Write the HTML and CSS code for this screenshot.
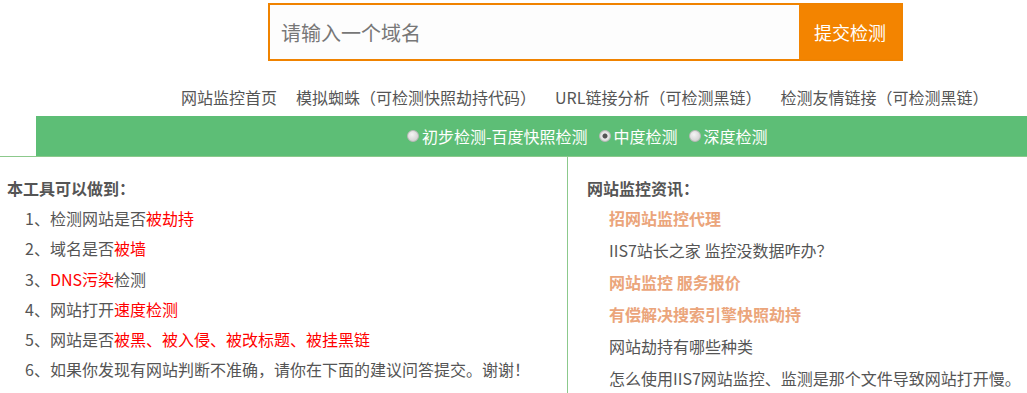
FILE: index.html
```html
<!DOCTYPE html>
<html lang="zh-CN">
<head>
    <meta charset="UTF-8">
    <title>网站监控</title>
    <link rel="stylesheet" href="styles.css">
</head>
<body>
    <form class="search">
        <input type="text" class="domain" placeholder="请输入一个域名">
        <button type="button" class="submit">提交检测</button>
    </form>

    <div class="nav">
        <a href="#">网站监控首页</a>
        <a href="#">模拟蜘蛛（可检测快照劫持代码）</a>
        <a href="#">URL链接分析（可检测黑链）</a>
        <a href="#">检测友情链接（可检测黑链）</a>
    </div>

    <div class="bar-wrap">
        <div class="bar">
            <label><input type="radio" name="level">初步检测-百度快照检测</label>
            <label><input type="radio" name="level" checked>中度检测</label>
            <label><input type="radio" name="level">深度检测</label>
        </div>
    </div>

    <div class="columns">
        <div class="col left">
            <h3>本工具可以做到：</h3>
            <p>1、检测网站是否<span class="red">被劫持</span></p>
            <p>2、域名是否<span class="red">被墙</span></p>
            <p>3、<span class="red">DNS污染</span>检测</p>
            <p>4、网站打开<span class="red">速度检测</span></p>
            <p>5、网站是否<span class="red">被黑、被入侵、被改标题、被挂黑链</span></p>
            <p>6、如果你发现有网站判断不准确，请你在下面的建议问答提交。谢谢！</p>
        </div>
        <div class="col right">
            <h3>网站监控资讯：</h3>
            <p><a href="#" class="hot">招网站监控代理</a></p>
            <p><a href="#">IIS7站长之家 监控没数据咋办？</a></p>
            <p><a href="#" class="hot">网站监控 服务报价</a></p>
            <p><a href="#" class="hot">有偿解决搜索引擎快照劫持</a></p>
            <p><a href="#">网站劫持有哪些种类</a></p>
            <p><a href="#">怎么使用IIS7网站监控、监测是那个文件导致网站打开慢。</a></p>
        </div>
    </div>
</body>
</html>
```

FILE: styles.css
```css
body {
    margin: 0;
    font-family: "Noto Sans CJK SC", "Liberation Sans", sans-serif;
    font-size: 16px;
    color: #555;
    background: #fff;
}
.search {
    display: flex;
    width: 635px;
    height: 58px;
    margin: 3px 0 0 268px;
    border: 2px solid #f08300;
    box-sizing: border-box;
}
.domain {
    flex: 1;
    border: none;
    outline: none;
    padding: 0 11px;
    font-family: inherit;
    font-size: 20px;
    background: #fdfdfd;
}
.domain::placeholder {
    color: #777;
}
.submit {
    width: 102px;
    border: none;
    background: #f38400;
    color: #fff;
    font-family: inherit;
    font-size: 18px;
    cursor: pointer;
}
.nav {
    display: flex;
    gap: 19px;
    padding-left: 181px;
    margin-top: 24px;
    line-height: 24px;
}
.nav a {
    color: #555;
    text-decoration: none;
}
.bar-wrap {
    margin-top: 7px;
    border-bottom: 1px solid #8cc98c;
}
.bar {
    margin-left: 36px;
    height: 40px;
    background: #5dbe76;
    display: flex;
    align-items: center;
    padding-left: 371px;
    color: #fff;
}
.bar label {
    display: flex;
    align-items: center;
    margin-right: 11px;
}
.bar input {
    appearance: none;
    width: 12px;
    height: 12px;
    margin: 0 3px 0 0;
    border-radius: 50%;
    background: radial-gradient(circle at 40% 35%, #f4f4f4, #c8c8c8);
    border: 1px solid #b9b9b9;
    box-sizing: border-box;
}
.bar input:checked {
    background: radial-gradient(circle, #555 0 2px, #ececec 3px, #c8c8c8);
}
.columns {
    display: flex;
}
.col {
    padding-top: 16px;
}
.left {
    width: 567px;
    padding-left: 7px;
    box-sizing: border-box;
}
.right {
    flex: 1;
    border-left: 1px solid #8cc98c;
    padding-left: 19px;
    height: 236px;
}
h3 {
    margin: 0;
    font-size: 16px;
    line-height: 30px;
    font-weight: bold;
}
.col p {
    margin: 0 0 0 18px;
    line-height: 30.3px;
}
.right p {
    margin-left: 22px;
    line-height: 32px;
}
.right h3 {
    margin-bottom: -1px;
}
.red {
    color: #f00;
}
.right a {
    color: #555;
    text-decoration: none;
}
.right a.hot {
    color: #eba57b;
    font-weight: bold;
}
```
